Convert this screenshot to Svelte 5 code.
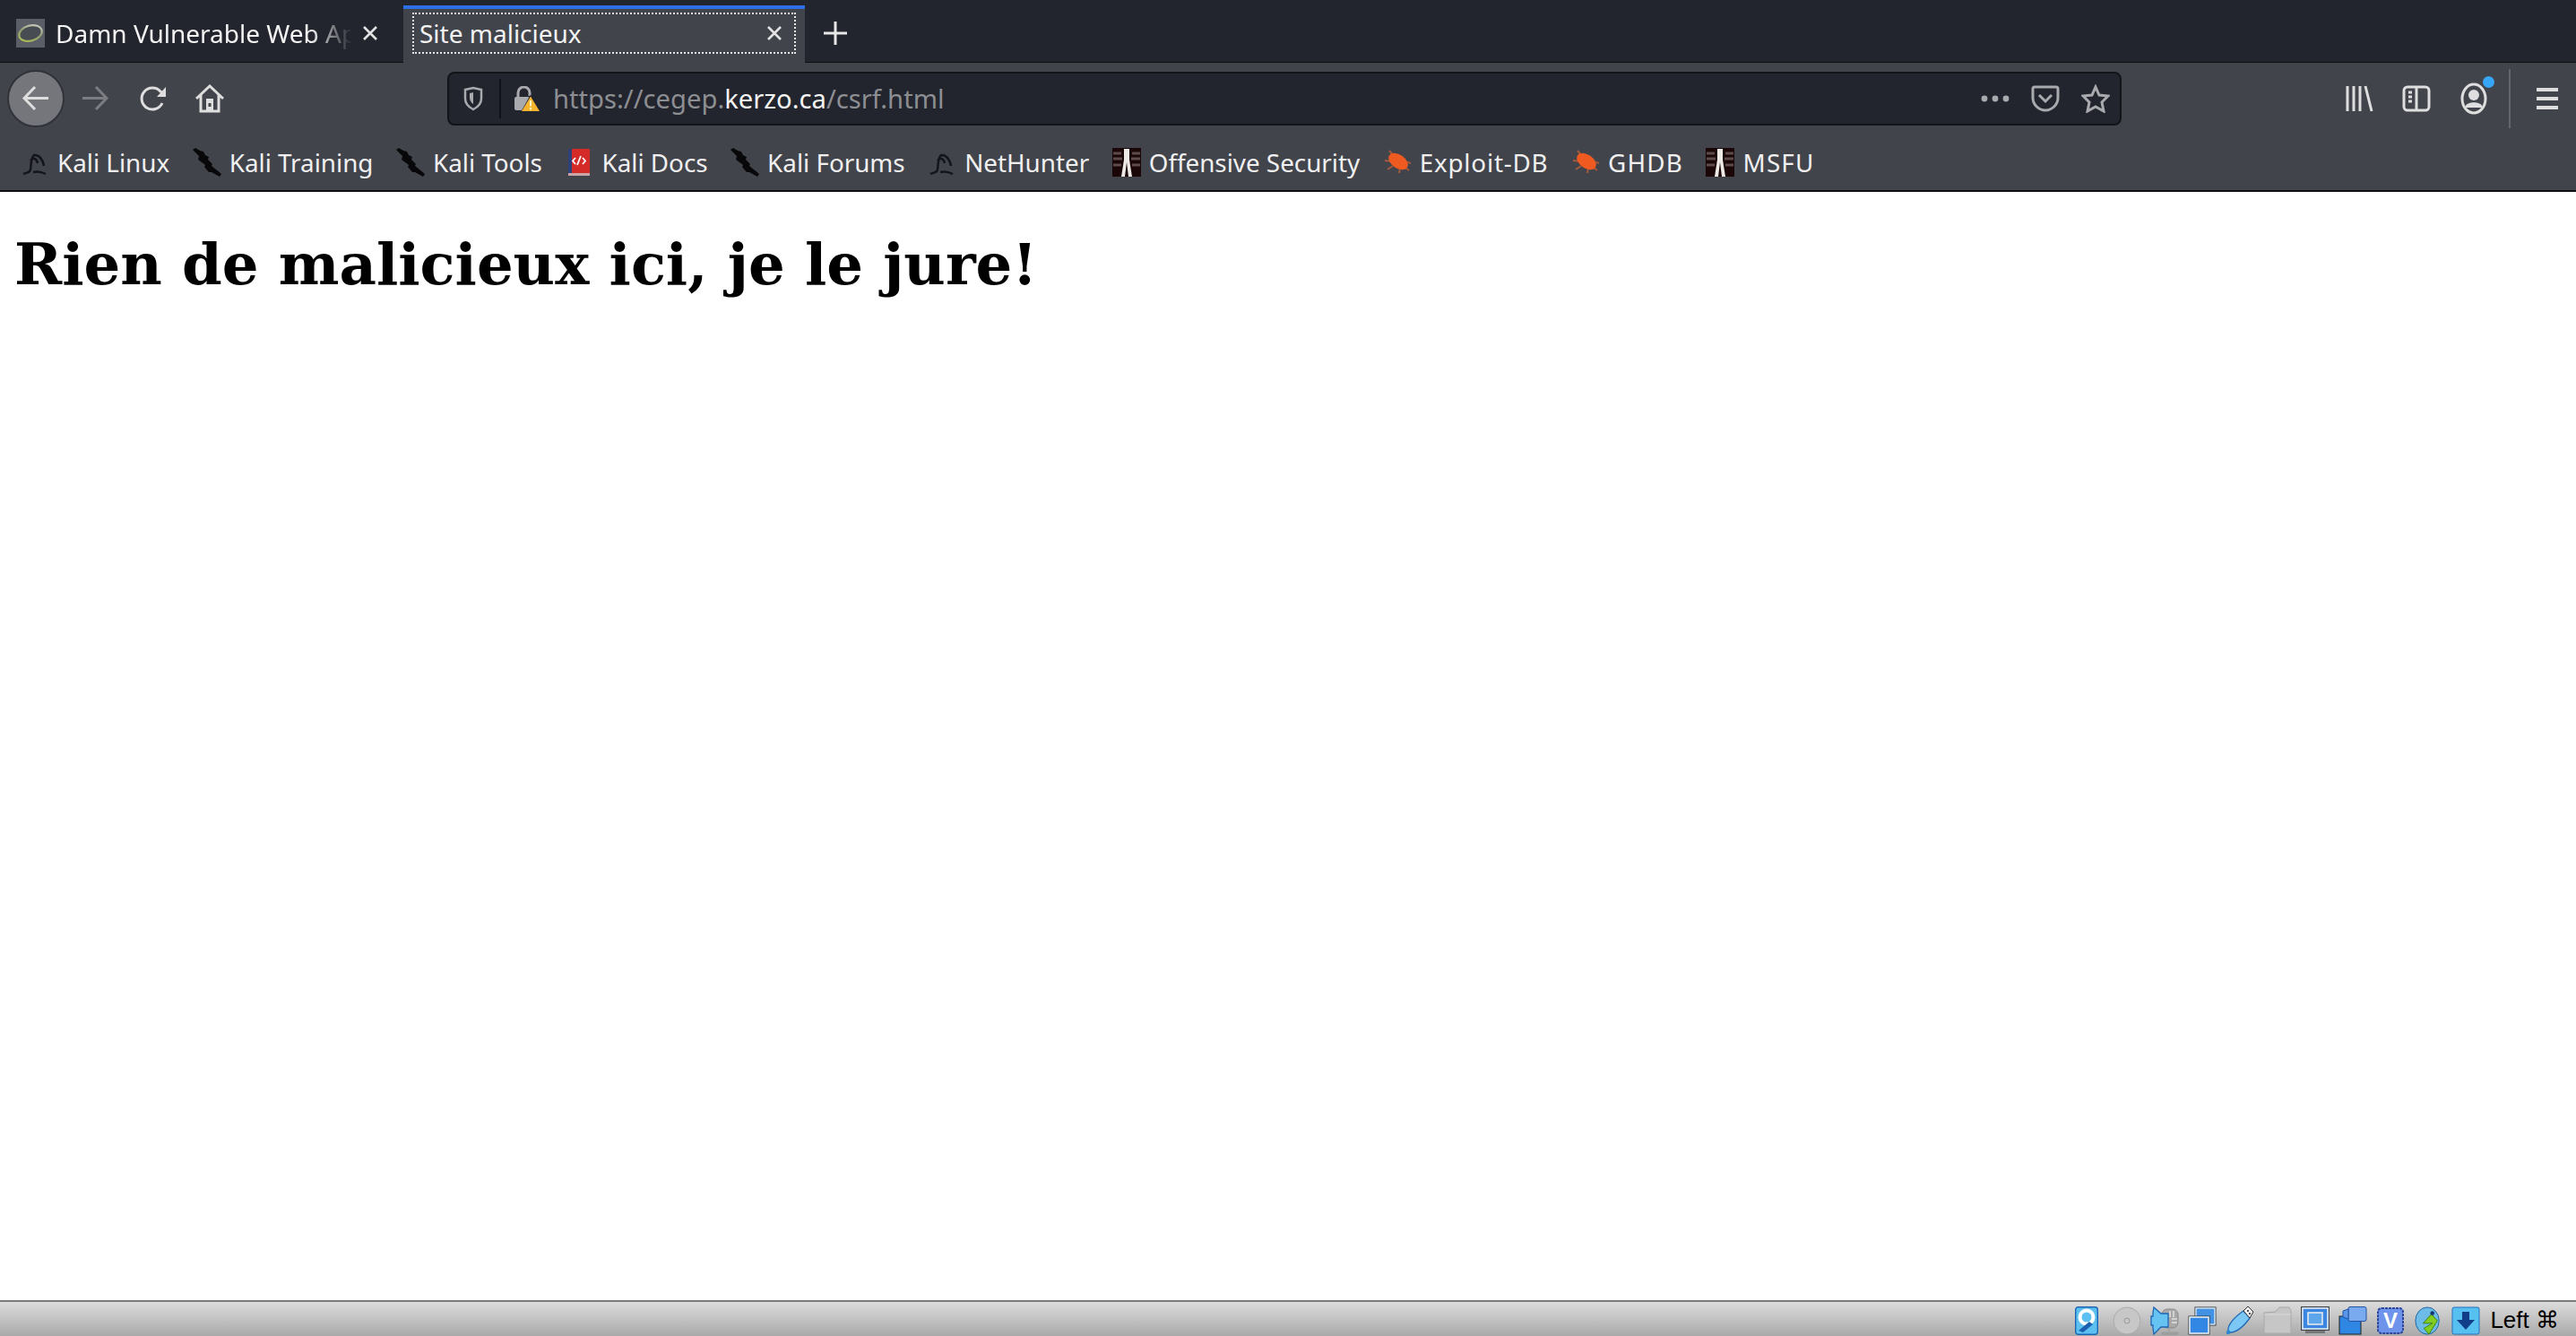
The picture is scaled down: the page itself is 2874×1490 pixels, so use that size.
<script>
  const bookmarks = [
    { label: 'Kali Linux', icon: 'dragon', cls: '' },
    { label: 'Kali Training', icon: 'knife', cls: '' },
    { label: 'Kali Tools', icon: 'knife', cls: '' },
    { label: 'Kali Docs', icon: 'docs', cls: '' },
    { label: 'Kali Forums', icon: 'knife', cls: '' },
    { label: 'NetHunter', icon: 'dragon', cls: '' },
    { label: 'Offensive Security', icon: 'offsec', cls: '' },
    { label: 'Exploit-DB', icon: 'bug', cls: 'wide' },
    { label: 'GHDB', icon: 'bug', cls: 'wider' },
    { label: 'MSFU', icon: 'offsec', cls: 'wider' }
  ];
</script>

<div class="screen">
  <header class="tabbar">
    <div class="tab">
      <svg class="favicon" viewBox="0 0 32 32">
        <defs>
          <linearGradient id="ring" x1="1" y1="0" x2="0" y2="1">
            <stop offset="0" stop-color="#d8d8d0" />
            <stop offset="0.5" stop-color="#8f9a70" />
            <stop offset="1" stop-color="#b5c64e" />
          </linearGradient>
        </defs>
        <rect width="32" height="32" fill="#5a5e66" />
        <ellipse cx="16" cy="16" rx="13" ry="8.500" transform="rotate(-16 16 16)" fill="#474b52" stroke="url(#ring)" stroke-width="2.200" />
      </svg>
      <span class="tab-title fade">Damn Vulnerable Web Application</span>
      <svg class="close" viewBox="0 0 20 20"><path d="M3 3 17 17M17 3 3 17" /></svg>
    </div>
    <div class="tab active">
      <div class="focus">
        <span class="tab-title">Site malicieux</span>
        <svg class="close" viewBox="0 0 20 20"><path d="M3 3 17 17M17 3 3 17" /></svg>
      </div>
    </div>
    <svg class="newtab" viewBox="0 0 28 28"><path d="M14 1V27M1 14H27" /></svg>
  </header>

  <nav class="navbar">
    <div class="back">
      <svg viewBox="0 0 32 32" class="ico"><path d="M30 15.500H4M15 3 3 15.500 15 28" /></svg>
    </div>
    <svg viewBox="0 0 32 32" class="ico forward"><path d="M2 15.500H28M17 3 29 15.500 17 28" /></svg>
    <svg viewBox="0 0 32 32" class="ico reload"><path d="M26 21A12 12 0 1 1 24 8L29 12" /><path class="fill" d="M20 14H30V3Z" /></svg>
    <svg viewBox="0 0 32 32" class="ico home">
      <path d="M1 16 16 2 31 16M6 12V30H26V12" />
      <path class="fill" d="M12 16H20V30H12Z" />
      <path class="hole" d="M14.500 21H17.500V25H14.500Z" />
    </svg>

    <div class="urlbar">
      <svg viewBox="0 0 24 28" class="shield"><path d="M3 4 12 2 21 4V14C21 20 16 24 12 26 8 24 3 20 3 14Z" /><path class="half" d="M8 8 12 7V20C10 19 8 16 8 13Z" /></svg>
      <span class="divider"></span>
      <svg viewBox="0 0 28 28" class="lock">
        <path d="M4 13V7.500A6.500 6.500 0 0 1 17 7.500V11" fill="none" stroke="#a9aaad" stroke-width="3" />
        <rect x="0" y="12" width="17" height="15" rx="2" fill="#a9aaad" />
        <path d="M18 9.500 29 29H7Z" fill="#23252e" />
        <path d="M18 11.500 28 28H8Z" fill="#f5b52e" />
        <path d="M18 16V22.500M18 24V26.500" stroke="#fff3c8" stroke-width="2" />
      </svg>
      <div class="url"><span>https://cegep.</span><b>kerzo.ca</b><span>/csrf.html</span></div>
      <svg viewBox="0 0 32 8" class="dots"><circle cx="4" cy="4" r="3.400" /><circle cx="16" cy="4" r="3.400" /><circle cx="28" cy="4" r="3.400" /></svg>
      <svg viewBox="0 0 32 30" class="pocket"><path d="M2 4C2 2.500 3 2 4 2H28C29 2 30 2.500 30 4V14C30 22 23 28 16 28 9 28 2 22 2 14Z" /><path d="M9 11 16 18 23 11" /></svg>
      <svg viewBox="0 0 32 32" class="star"><path d="M16 3 20 12 30 13 23 20 25 30 16 25 7 30 9 20 2 13 12 12Z" /></svg>
    </div>

    <div class="tools">
      <svg viewBox="0 0 32 32" class="ico lib"><path d="M3 2V30M10 2V30M17 2V30M23 2 30 30" /></svg>
      <svg viewBox="0 0 32 32" class="ico side"><rect x="2" y="3" width="28" height="26" rx="4" /><path d="M16 3V29M7 9H11M7 14H11M7 19H11" /></svg>
      <div class="account">
        <svg viewBox="0 0 32 36" class="ico acc"><ellipse cx="16" cy="18" rx="13" ry="16" /><circle class="fill" cx="16" cy="14" r="6" /><path class="fill" d="M7 26C9 21 23 21 25 26V28H7Z" /></svg>
        <span class="badge"></span>
      </div>
      <span class="sep"></span>
      <div class="menu"><i></i><i></i><i></i></div>
    </div>
  </nav>

  <div class="bookmarks">
    {#each bookmarks as b}
      <div class="bm">
        {#if b.icon === 'dragon'}
          <svg viewBox="0 0 32 32" class="bm-ico"><path d="M3 29C9 27 10 27 11 24 12 18 11 12 15 8 21 7 25 14 26 20M11 14C14 10 18 12 19 17M14 27C18 26 24 27 28 29" fill="none" stroke="#14151a" stroke-width="2.500" /></svg>
        {:else if b.icon === 'knife'}
          <svg viewBox="0 0 32 32" class="bm-ico"><path d="M0 2 3 0 8 3 12 4 14 8 18 10 17 13 22 18 21 20 32 29 30 32 21 27 18 27 13 21 14 19 6 13 7 9Z" fill="#08080a" /></svg>
        {:else if b.icon === 'docs'}
          <svg viewBox="0 0 32 32" class="bm-ico"><rect x="4" y="1" width="4" height="27" fill="#2f3f78" /><rect x="8" y="1" width="20" height="27" fill="#d52b28" /><rect x="4" y="28" width="24" height="3" fill="#c9a5a5" /><path d="M14 19 18 9M12 11 9 14.500 12 18M20 11 23 14.500 20 18" stroke="#fff" stroke-width="1.800" fill="none" /></svg>
        {:else if b.icon === 'offsec'}
          <svg viewBox="0 0 32 32" class="bm-ico">
            <rect width="32" height="32" fill="#1a0607" />
            <path d="M1 6H10M1 12H11M1 19H10M22 6H31M21 12H31M22 19H31" stroke="#5d4a4a" stroke-width="3" />
            <path d="M13 1H19V13L22 32H18L16 16 14 32H10L13 13Z" fill="#ece9e6" />
          </svg>
        {:else}
          <svg viewBox="0 0 32 32" class="bm-ico">
            <path d="M7 3 12 9M2 14 9 15M5 24 11 20M18 28 19 22M29 25 22 20M31 17 24 15" stroke="#a35a3c" stroke-width="2" />
            <ellipse cx="17" cy="15" rx="12" ry="7.500" transform="rotate(35 17 15)" fill="#ee5a20" />
          </svg>
        {/if}
        <span class={b.cls}>{b.label}</span>
      </div>
    {/each}
  </div>

  <main class="page">
    <h1>Rien de malicieux ici, je le jure!</h1>
  </main>

  <footer class="status">
    <svg viewBox="0 0 26 32" class="st hd"><rect x=".7" y=".7" width="24.600" height="30.600" rx="3" fill="#5cc0f0" stroke="#1d66b6" stroke-width="1.400" /><circle cx="13" cy="12" r="7.500" fill="none" stroke="#fff" stroke-width="4" /><path d="M4 27 16 17 20 20 9 29Z" fill="#1d5fb0" /></svg>
    <svg viewBox="0 0 32 32" class="st"><circle cx="16" cy="16" r="15" fill="#c7c7c7" stroke="#aaa" /><circle cx="16" cy="16" r="3" fill="none" stroke="#999" /></svg>
    <svg viewBox="0 0 32 32" class="st">
      <rect x="13" y="3" width="18" height="21" rx="6" fill="#a8a8a8" stroke="#8a8a8a" />
      <path d="M22 5V12M26 5V12M24 14H30M24 18H30" stroke="#e0e0e0" stroke-width="1.500" />
      <path d="M21 24V28M13 29H31V32H13Z" fill="#9d9d9d" stroke="#9d9d9d" />
      <path d="M1 11H3L3 7 4 1 12 8H20V23H12L4 31 3 24V21H1Z" fill="#67c3f2" stroke="#1d66b6" stroke-width="1.300" />
    </svg>
    <svg viewBox="0 0 32 32" class="st"><rect x="8" y="1" width="23" height="20" fill="#4192e2" stroke="#333" stroke-width="1" /><rect x="9" y="2" width="21" height="18" fill="none" stroke="#f2f2f2" stroke-width="1.200" /><rect x="1" y="11" width="23" height="20" fill="#3287e5" stroke="#333" stroke-width="1" /><rect x="2" y="12" width="21" height="18" fill="none" stroke="#f2f2f2" stroke-width="1.500" /></svg>
    <svg viewBox="0 0 32 32" class="st"><path d="M3 27C2 22 8 13 20 5L27 13C19 24 12 29 5 29Z" fill="#7cc8f4" stroke="#2169b6" stroke-width="1.300" /><path d="M20 5 25 0 31 6 27 13Z" fill="#eee" stroke="#333" /><circle cx="25" cy="5" r="1" fill="#222" /><circle cx="27" cy="8" r="1" fill="#222" /><circle cx="3" cy="29" r="2.200" fill="#2c86d0" /></svg>
    <svg viewBox="0 0 32 32" class="st"><path d="M1 7 14 6 18 1H29L31 5V30H1Z" fill="#c6c6c6" stroke="#a8a8a8" /><path d="M1 9H31" stroke="#dadada" /></svg>
    <svg viewBox="0 0 32 32" class="st"><rect x=".5" y=".5" width="31" height="26" fill="#3a86e0" stroke="#444" /><rect x="2" y="2" width="28" height="23" fill="none" stroke="#eee" stroke-width="1.500" /><rect x="8" y="7" width="16" height="13" fill="#5da6ec" stroke="#eee" stroke-width="1.500" /><rect x="5" y="27" width="22" height="3" fill="#777" /></svg>
    <svg viewBox="0 0 32 32" class="st"><rect x="1" y="11" width="24" height="20" fill="#2f86e3" stroke="#222" stroke-width="1" /><rect x="11" y="0.500" width="20" height="16" rx="2" fill="#79aaf0" stroke="#2353a5" /><path d="M5 5 11 3V14L5 12Z" fill="#5a96ea" stroke="#2353a5" /></svg>
    <svg viewBox="0 0 32 32" class="st"><rect x="2" y="2" width="28" height="28" rx="4" fill="#6e93ea" stroke="#2d469e" stroke-width="2" stroke-dasharray="3 1" /><text x="16" y="24" text-anchor="middle" class="vtext">V</text></svg>
    <svg viewBox="0 0 32 34" class="st"><ellipse cx="15" cy="17" rx="14" ry="16" fill="#6dbce8" stroke="#1c5f9c" /><path d="M10 20 20 9 27 17 17 33 11 26 21 20Z" fill="#80cc22" stroke="#3d7d0e" /><circle cx="21" cy="8" r="2.500" fill="#123a6e" /></svg>
    <svg viewBox="0 0 32 32" class="st"><rect x="1" y="1" width="30" height="30" rx="2" fill="#56c1f0" stroke="#2471c0" /><path d="M12 6H20V15H26L16 26 6 15H12Z" fill="#123d88" /></svg>
    <span class="host">Left ⌘</span>
  </footer>
</div>

<style>
  :global(body) { margin: 0; background: #fff; }
  .screen { height: 100vh; display: flex; flex-direction: column; font-family: "Noto Sans", sans-serif; overflow: hidden; }

  .tabbar { height: 69px; flex: none; background: #23252e; border-bottom: 1px solid #0e0f13; display: flex; align-items: stretch; position: relative; box-sizing: content-box; }
  .tab { width: 450px; box-sizing: border-box; display: flex; align-items: center; padding: 5px 27px 0 18px; color: #f3f3f3; font-size: 28px; }
  .favicon { width: 32px; height: 32px; flex: none; margin-right: 12px; }
  .tab-title { white-space: nowrap; flex: 1; overflow: hidden; min-width: 0; }
  .fade { -webkit-mask-image: linear-gradient(to right, #000 86%, transparent 100%); mask-image: linear-gradient(to right, #000 86%, transparent 100%); margin-right: 10px; }
  .close { width: 20px; height: 20px; flex: none; fill: none; stroke: #e3e3e3; stroke-width: 2.600; }
  .tab.active { width: 448px; background: #42444c; border-top: 4px solid #2f6fe6; margin-top: 6px; margin-bottom: -1px; padding: 4px 10px 10px; align-items: stretch; }
  .focus { flex: 1; display: flex; align-items: center; border: 2px dotted #e8e8e8; padding: 0 12px 0 6px; }
  .newtab { width: 28px; height: 28px; align-self: center; margin: 5px 0 0 20px; fill: none; stroke: #e8e8e8; stroke-width: 3; }

  .navbar { height: 80px; flex: none; background: #42444c; display: flex; align-items: center; padding: 10px 0 10px 8px; box-sizing: border-box; }
  .ico { width: 32px; height: 32px; fill: none; stroke: #dedede; stroke-width: 3; flex: none; }
  .ico .fill { fill: #dedede; stroke: none; }
  .ico .hole { fill: #42444c; stroke: none; }
  .back { width: 64px; height: 64px; flex: none; box-sizing: border-box; border-radius: 50%; background: #75767c; border: 2px solid #30323a; display: flex; align-items: center; justify-content: center; }
  .forward { stroke: #7c7d83; margin-left: 18px; }
  .reload { margin-left: 33px; }
  .home { margin-left: 31px; }

  .urlbar { width: 1868px; height: 60px; flex: none; margin-left: 249px; box-sizing: border-box; background: #23252e; border: 2px solid #131419; border-radius: 8px; display: flex; align-items: center; padding-left: 15px; }
  .shield { width: 24px; height: 28px; flex: none; fill: none; stroke: #a9aaad; stroke-width: 2.500; }
  .shield .half { fill: #a9aaad; stroke: none; }
  .divider { width: 2px; height: 44px; background: #12131a; margin-left: 17px; flex: none; }
  .lock { width: 28px; height: 28px; flex: none; margin-left: 15px; }
  .url { font-size: 29.200px; color: #8d8e92; margin-left: 15px; flex: 1; white-space: nowrap; }
  .url b { color: #f5f5f5; font-weight: 400; }
  .dots { width: 32px; height: 8px; fill: #a9aaad; flex: none; }
  .pocket { width: 32px; height: 30px; margin-left: 24px; fill: none; stroke: #a9aaad; stroke-width: 3; flex: none; }
  .star { width: 32px; height: 32px; margin-left: 24px; margin-right: 11px; fill: none; stroke: #a9aaad; stroke-width: 3; flex: none; }

  .tools { display: flex; align-items: center; flex: 1; padding-left: 249px; }
  .side { margin-left: 32px; }
  .account { position: relative; margin-left: 32px; display: flex; }
  .acc { height: 36px; }
  .badge { position: absolute; top: -7px; right: -7px; width: 13px; height: 13px; border-radius: 50%; background: #37a6f6; }
  .sep { width: 2px; height: 66px; background: #63656c; margin-left: 23px; flex: none; }
  .menu { width: 24px; height: 24px; margin-left: 29px; display: flex; flex-direction: column; justify-content: space-between; flex: none; }
  .menu i { display: block; height: 4px; background: #dedede; }

  .bookmarks { height: 64px; flex: none; box-sizing: border-box; background: #42444c; border-bottom: 2px solid #0e0f13; display: flex; align-items: center; gap: 25.500px; padding-left: 23px; color: #f0f0f0; font-size: 27.800px; white-space: nowrap; }
  .bm { display: flex; align-items: center; gap: 9px; }
  .bm-ico { width: 32px; height: 32px; flex: none; }
  .wide { letter-spacing: 0.800px; }
  .wider { letter-spacing: 1.200px; }

  .page { flex: 1; padding: 0 16px; color: #000; min-height: 0; }
  h1 { font-family: "DejaVu Serif", serif; font-size: 64px; font-weight: 700; margin: 43px 0; }

  .status { height: 40px; flex: none; box-sizing: border-box; border-top: 2px solid #7c7c7c; background: linear-gradient(#dcdcdc, #a9a9a9); display: flex; align-items: center; justify-content: flex-end; gap: 10px; padding: 3px 19px 0 0; }
  .st { width: 32px; height: 32px; flex: none; }
  .hd { width: 26px; margin-right: 6px; }
  .vtext { font-family: "Liberation Sans", sans-serif; font-weight: 700; font-size: 24px; fill: #fff; }
  .host { font-family: "Liberation Sans", "DejaVu Sans", sans-serif; font-size: 26px; color: #000; margin-left: 1px; white-space: nowrap; }
</style>
